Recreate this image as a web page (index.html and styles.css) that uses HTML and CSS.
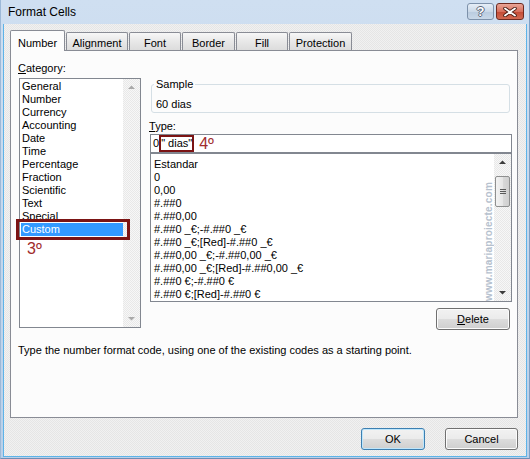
FILE: index.html
```html
<!DOCTYPE html>
<html>
<head>
<meta charset="utf-8">
<link rel="stylesheet" href="styles.css">
</head>
<body>
<div class="window">
  <div class="titlebar">
    <span class="title">Format Cells</span>
    <div class="caption-btns">
      <span class="cap-btn help">?</span>
      <span class="cap-btn close">
        <svg width="14" height="10" viewBox="0 0 14 10"><path d="M2 1.5 L12 8.5 M12 1.5 L2 8.5" stroke="#4b1d14" stroke-width="3.6" stroke-linecap="round"/><path d="M2 1.5 L12 8.5 M12 1.5 L2 8.5" stroke="#ffffff" stroke-width="1.8" stroke-linecap="round"/></svg>
      </span>
    </div>
  </div>
  <div class="client">
    <div class="tabs">
      <div class="tab active t-number">Number</div>
      <div class="tab t-align">Alignment</div>
      <div class="tab t-font">Font</div>
      <div class="tab t-border">Border</div>
      <div class="tab t-fill">Fill</div>
      <div class="tab t-prot">Protection</div>
    </div>
    <div class="panel">
      <div class="row">
        <div class="left">
          <div class="label"><u>C</u>ategory:</div>
          <div class="listbox cat">
            <div class="items">
              <div class="item">General</div>
              <div class="item">Number</div>
              <div class="item">Currency</div>
              <div class="item">Accounting</div>
              <div class="item">Date</div>
              <div class="item">Time</div>
              <div class="item">Percentage</div>
              <div class="item">Fraction</div>
              <div class="item">Scientific</div>
              <div class="item">Text</div>
              <div class="item">Special</div>
              <div class="item selected">Custom</div>
              <div class="step step3">3º</div>
            </div>
            <div class="vscroll disabled">
              <svg class="arrow" width="17" height="17" viewBox="0 0 17 17"><path d="M5 10 L8.5 6.5 L12 10 Z" fill="#a9a9a9"/></svg>
              <svg class="arrow" width="17" height="17" viewBox="0 0 17 17"><path d="M5 7 L8.5 10.5 L12 7 Z" fill="#a9a9a9"/></svg>
            </div>
            <div class="mark-box custom-mark"></div>
          </div>
        </div>
        <div class="right">
          <fieldset class="sample">
            <legend>Sample</legend>
            <div class="sample-val">60 dias</div>
          </fieldset>
          <div class="label type-label"><u>T</u>ype:</div>
          <div class="type-input">0<span class="mark-inline">" dias"</span><span class="step step4">4º</span></div>
          <div class="listbox fmt">
            <div class="items">
              <div class="item">Estandar</div>
              <div class="item">0</div>
              <div class="item">0,00</div>
              <div class="item">#.##0</div>
              <div class="item">#.##0,00</div>
              <div class="item">#.##0 _€;-#.##0 _€</div>
              <div class="item">#.##0 _€;[Red]-#.##0 _€</div>
              <div class="item">#.##0,00 _€;-#.##0,00 _€</div>
              <div class="item">#.##0,00 _€;[Red]-#.##0,00 _€</div>
              <div class="item">#.##0 €;-#.##0 €</div>
              <div class="item">#.##0 €;[Red]-#.##0 €</div>
            </div>
            <div class="vscroll">
              <svg class="arrow" width="17" height="17" viewBox="0 0 17 17"><path d="M5 10 L8.5 6.5 L12 10 Z" fill="#3c3c3c"/></svg>
              <div class="thumb"><span></span><span></span><span></span></div>
              <div class="track"></div>
              <svg class="arrow" width="17" height="17" viewBox="0 0 17 17"><path d="M5 7 L8.5 10.5 L12 7 Z" fill="#3c3c3c"/></svg>
            </div>
            <span class="watermark">www.mariaproiecte.com</span>
          </div>
          <div class="btn-row"><button class="btn delete"><u>D</u>elete</button></div>
        </div>
      </div>
      <p class="desc">Type the number format code, using one of the existing codes as a starting point.</p>
    </div>
    <div class="footer">
      <button class="btn ok">OK</button>
      <button class="btn cancel">Cancel</button>
    </div>
  </div>
</div>
</body>
</html>
```
FILE: styles.css
```css
* { box-sizing: border-box; }
html, body { margin: 0; padding: 0; }
body {
  width: 530px;
  height: 459px;
  overflow: hidden;
  font-family: "Liberation Sans", Arial, sans-serif;
  font-size: 11px;
  color: #000;
  background: #fff;
}
.window {
  width: 530px;
  height: 459px;
  padding: 0 2px 1px 2px;
  background: linear-gradient(#cfdff1, #bad0e9);
  display: flex;
  flex-direction: column;
  border-left: 1px solid #9db9d8;
  border-right: 1px solid #7f9fc4;
  border-bottom: 1px solid #6f8db3;
}
.titlebar {
  height: 24px;
  flex: none;
  display: flex;
  align-items: center;
  padding-left: 5px;
}
.title { font-size: 12px; line-height: 14px; }
.caption-btns {
  margin-left: auto;
  display: flex;
  gap: 2px;
  padding-right: 3px;
  align-self: flex-start;
  margin-top: 3px;
}
.cap-btn {
  height: 17px;
  border-radius: 3px;
  display: flex;
  align-items: center;
  justify-content: center;
}
.help {
  width: 27px;
  border: 1px solid #7d91aa;
  background: linear-gradient(#e6eef7, #cbd9e8 50%, #b9cbdf 51%, #c9d8e8);
  color: #fff;
  font-weight: bold;
  font-size: 13px;
  text-shadow: 1px 0 0 #5a6678, -1px 0 0 #5a6678, 0 1px 0 #5a6678, 0 -1px 0 #5a6678;
}
.close {
  width: 28px;
  border: 1px solid #6e2a20;
  background: linear-gradient(#e9a597, #d8705d 50%, #c44a34 51%, #d26a52);
}
.client {
  flex: 1;
  border: 1px solid #5db3e8;
  border-top: none;
  padding: 6px 8px 0 6px;
  background: repeating-conic-gradient(#f1f1f1 0 25%, #e5e5e5 0 50%) 0 0 / 2px 2px;
}
.tabs {
  display: flex;
  align-items: flex-end;
  gap: 1px;
  height: 20px;
  position: relative;
  z-index: 1;
}
.tab {
  height: 18px;
  border: 1px solid #898c95;
  border-bottom: none;
  background: linear-gradient(#f7f7f7, #e9e9e9 45%, #dcdcdc);
  text-align: center;
  padding-top: 3px;
  line-height: 14px;
  border-radius: 2px 2px 0 0;
}
.tab.active {
  height: 21px;
  margin-bottom: -1px;
  background: #fcfcfc;
  padding-top: 5px;
}
.t-number { width: 55px; }
.t-align { width: 62px; }
.t-font { width: 52px; }
.t-border { width: 53px; }
.t-fill { width: 52px; }
.t-prot { width: 63px; }
.panel {
  height: 368px;
  border: 1px solid #898c95;
  background: #fcfcfc;
  padding: 10px 5px 0 8px;
}
.row { display: flex; gap: 9px; }
.left { width: 122px; flex: none; }
.right { flex: 1; display: flex; flex-direction: column; }
.label { line-height: 14px; margin-left: -1px; }
.listbox {
  position: relative;
  border: 1px solid #828790;
  background: #fff;
  display: flex;
}
.listbox .items { flex: 1; }
.item { line-height: 13px; white-space: nowrap; }
.cat { margin-top: 3px; height: 250px; }
.cat .items { padding: 1px 0 0 1px; }
.cat .item { padding-left: 1px; }
.cat .item.selected { background: #3399ff; color: #fff; }
.vscroll {
  width: 17px;
  flex: none;
  display: flex;
  flex-direction: column;
  justify-content: space-between;
  background: repeating-conic-gradient(#f7f7f7 0 25%, #e8e8e8 0 50%) 0 0 / 2px 2px;
}
.arrow { display: block; flex: none; }
.step {
  color: #a02c2c;
  font-size: 16px;
  line-height: 18px;
}
.step3 { margin-top: 4px; padding-left: 6px; }
.mark-box {
  position: absolute;
  border: 3px solid #7b1414;
  pointer-events: none;
}
.custom-mark { left: -4px; top: 140px; width: 114px; height: 21px; }
.sample {
  margin: 16px 2px 0 1px;
  padding: 0 4px 1px 4px;
  border: 1px solid #d5dfe5;
  border-radius: 3px;
  min-width: 0;
}
.sample legend {
  padding: 0 2px;
  margin-left: -2px;
  line-height: 14px;
}
.sample-val { line-height: 14px; padding-top: 6px; }
.type-label { margin-top: 6px; }
.type-input {
  margin-top: 1px;
  height: 19px;
  border: 1px solid #828790;
  background: #fff;
  padding-left: 2px;
  display: flex;
  align-items: center;
  line-height: 13px;
}
.mark-inline {
  border: 2px solid #7b1414;
  padding: 0;
  height: 17px;
  display: flex;
  align-items: center;
}
.step4 { margin-left: 5px; }
.fmt { height: 149px; }
.fmt .items { padding: 4px 0 0 3px; }
.fmt .vscroll .track { flex: 1; }
.thumb {
  margin: 5px 1px 0 1px;
  height: 31px;
  border: 1px solid #8e8f8f;
  border-radius: 2px;
  background: linear-gradient(90deg, #f3f3f3, #e6e6e6 50%, #d9d9d9 51%, #cfcfcf);
  display: flex;
  flex-direction: column;
  align-items: center;
  justify-content: center;
  gap: 1px;
}
.thumb span { width: 6px; height: 1px; background: #5a5a5a; display: block; }
.watermark {
  position: absolute;
  left: 332px;
  top: 28px;
  writing-mode: vertical-rl;
  transform: rotate(180deg);
  font-size: 10px;
  font-weight: bold;
  color: #b6c1ce;
  letter-spacing: 0.2px;
}
.btn-row { display: flex; justify-content: flex-end; margin-top: 6px; padding-right: 2px; }
.btn {
  font-family: inherit;
  font-size: 11px;
  height: 22px;
  border: 1px solid #707070;
  border-radius: 3px;
  background: linear-gradient(#f2f2f2, #ebebeb 48%, #dddddd 50%, #cfcfcf);
  color: #000;
  padding: 0;
  box-shadow: inset 0 0 0 1px #fcfcfc;
}
.delete { width: 74px; }
.desc { margin: 13px 0 0 -1px; line-height: 14px; }
.footer {
  display: flex;
  justify-content: flex-end;
  gap: 20px;
  margin-top: 10px;
}
.ok { width: 64px; border-color: #3c7fb1; box-shadow: inset 0 0 0 1px #bfe6fb; }
.cancel { width: 73px; }
```
